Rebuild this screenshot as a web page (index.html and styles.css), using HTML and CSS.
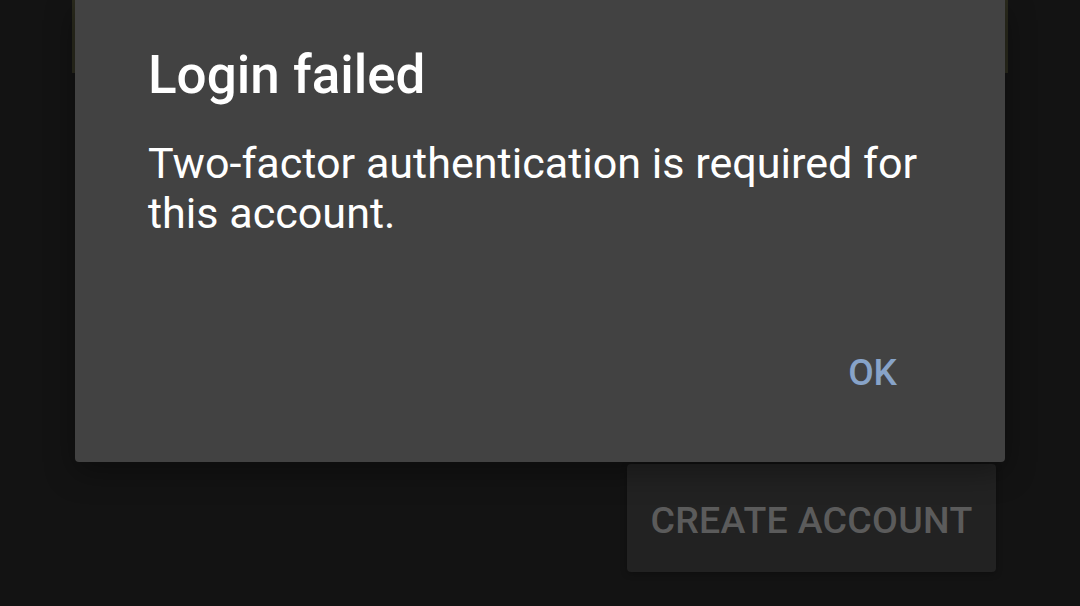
FILE: index.html
```html
<!DOCTYPE html>
<html lang="en">
<head>
<meta charset="utf-8">
<title>Login failed</title>
<link rel="stylesheet" href="styles.css">
</head>
<body>
<div class="page">
  <div class="field"></div>
  <div class="actions-row">
    <button class="create-btn">CREATE ACCOUNT</button>
  </div>
</div>
<div class="dialog" role="dialog">
  <h1 class="dialog-title">Login failed</h1>
  <p class="dialog-message">Two-factor authentication is required for this account.</p>
  <div class="dialog-actions">
    <button class="ok-btn">OK</button>
  </div>
</div>
</body>
</html>
```

FILE: styles.css
```css
html, body {
  margin: 0;
  padding: 0;
  width: 1080px;
  height: 606px;
  overflow: hidden;
  background: #131313;
  font-family: Roboto, "Liberation Sans", sans-serif;
}

.page {
  display: flex;
  flex-direction: column;
  padding: 0 72px 0 72px;
}

.field {
  height: 73px;
  background: #2a2a1d;
}

.actions-row {
  display: flex;
  justify-content: flex-end;
  padding-top: 391px;
  padding-right: 12px;
}

.create-btn {
  width: 369px;
  height: 108px;
  border: none;
  border-radius: 4px;
  background: #222222;
  color: #5b5b5b;
  font-family: Roboto, "Liberation Sans", sans-serif;
  font-weight: 500;
  font-size: 37.5px;
  letter-spacing: 0.3px;
  padding: 4px 0 0 0;
  box-shadow: 0 2px 6px rgba(0,0,0,0.25);
}

.dialog {
  position: absolute;
  left: 75px;
  top: 0;
  width: 930px;
  height: 462px;
  box-sizing: border-box;
  background: #424242;
  border-radius: 0 0 4px 4px;
  padding: 45px 73px 0 73px;
  display: flex;
  flex-direction: column;
  box-shadow: 0 10px 30px rgba(0,0,0,0.35);
}

.dialog-title {
  margin: 0;
  font-size: 53px;
  line-height: 60px;
  font-weight: 500;
  color: #ffffff;
}

.dialog-message {
  margin: 34px 0 0 0;
  font-size: 43.1px;
  line-height: 50px;
  font-weight: 400;
  color: #ffffff;
}

.dialog-actions {
  display: flex;
  justify-content: flex-end;
  margin-top: auto;
  padding-bottom: 67px;
  margin-right: 35px;
}

.ok-btn {
  border: none;
  background: transparent;
  color: #87a3c8;
  font-family: Roboto, "Liberation Sans", sans-serif;
  font-weight: 500;
  font-size: 37px;
  line-height: 44px;
  padding: 0;
}
```
